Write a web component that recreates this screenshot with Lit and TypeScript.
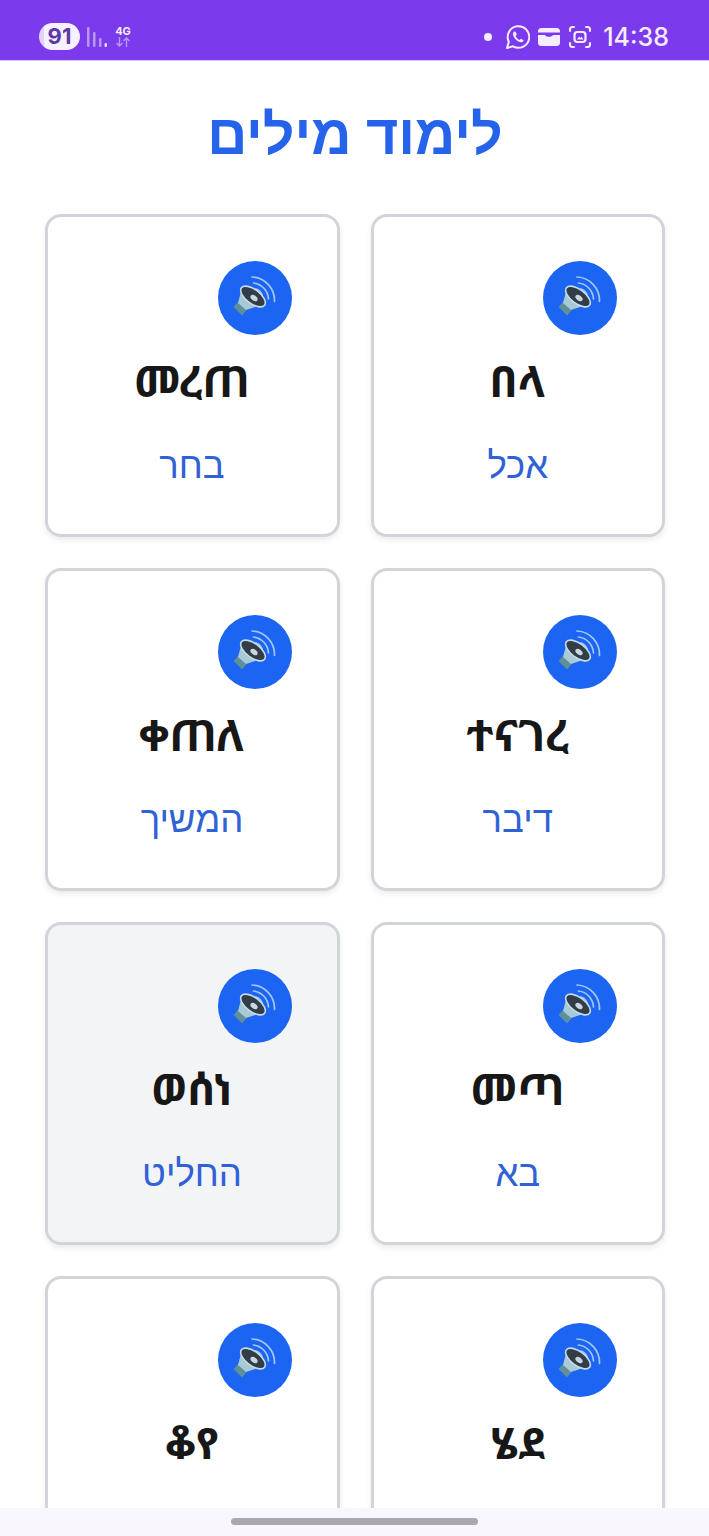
import { LitElement, css, html, nothing, svg } from 'lit';
import { customElement, property } from 'lit/decorators.js';

interface WordItem {
  word: string;
  meaning?: string;
  selected?: boolean;
}

const WORDS: WordItem[] = [
  { word: 'በላ', meaning: 'אכל' },
  { word: 'መረጠ', meaning: 'בחר' },
  { word: 'ተናገረ', meaning: 'דיבר' },
  { word: 'ቀጠለ', meaning: 'המשיך' },
  { word: 'መጣ', meaning: 'בא' },
  { word: 'ወሰነ', meaning: 'החליט', selected: true },
  { word: 'ሄደ' },
  { word: 'ቆየ' },
];

const speakerIcon = svg`
  <svg class="speaker" viewBox="0 0 74 74" aria-hidden="true">
    <g fill="none" stroke="#a4c6f6" stroke-linecap="round" stroke-width="1.7">
      <path d="M34 16 A23.5 23.5 0 0 1 56.5 40.5" />
      <path d="M35.5 22 A17 17 0 0 1 50.5 38" />
      <path d="M38 28 A10 10 0 0 1 44.5 36" />
    </g>
    <path d="M15.5 46 L21 40 L29.5 48 L24 54.5 Z" fill="#5f8f98" />
    <path d="M20 42 L24 27 L46 43 L28 49 Z" fill="#a8c9d6" />
    <ellipse cx="35" cy="35.5" rx="14.5" ry="7" transform="rotate(37 35 35.5)" fill="#333d47" stroke="#c4dce7" stroke-width="1.6" />
    <ellipse cx="36" cy="37" rx="4" ry="2.6" transform="rotate(37 36 37)" fill="#c9d8de" />
  </svg>
`;

@customElement('status-bar')
export class StatusBar extends LitElement {
  static styles = css`
    :host {
      display: flex;
      flex: none;
      align-items: center;
      justify-content: space-between;
      box-sizing: border-box;
      height: 61px;
      padding: 13px 40px 0 39px;
      background: #7c3aed;
      border-bottom: 1px solid #d8c2f9;
      color: #f5edff;
      font-family: Inter, Roboto, sans-serif;
    }

    .group {
      display: flex;
      align-items: center;
    }

    .battery {
      width: 41px;
      height: 27px;
      border-radius: 14px;
      background: linear-gradient(90deg, #e2d2fb 0 5px, #f6f0ff 5px);
      color: #5b3aa8;
      font-size: 22px;
      font-weight: 700;
      line-height: 27px;
      text-align: center;
    }

    .signal {
      width: 20px;
      height: 20px;
      margin-left: 7px;
    }

    .net {
      display: flex;
      flex-direction: column;
      align-items: center;
      width: 18px;
      margin: -2px 0 0 7px;
      font-size: 11px;
      font-weight: 700;
      line-height: 12px;
    }

    .arrows {
      width: 16px;
      height: 10px;
    }

    .dot {
      width: 8px;
      height: 8px;
      border-radius: 50%;
      background: #f5edff;
    }

    .icon {
      width: 24px;
      height: 24px;
    }

    .whatsapp {
      margin-left: 14px;
    }

    .wallet {
      margin-left: 7px;
    }

    .scan {
      margin-left: 7px;
    }

    .time {
      margin-left: 11px;
      font-size: 25px;
      font-weight: 500;
      line-height: 28px;
    }
  `;

  render() {
    return html`
      <div class="group">
        <div class="battery">91</div>
        <svg class="signal" viewBox="0 0 20 20" fill="#b79af0">
          <rect x="0" y="0" width="2.5" height="20" rx="1" />
          <rect x="6" y="5" width="2.5" height="15" rx="1" />
          <rect x="12" y="11" width="2.5" height="9" rx="1" />
          <rect x="17.5" y="16" width="2.5" height="4" rx="1" fill="#e6dafb" />
        </svg>
        <div class="net">
          4G
          <svg class="arrows" viewBox="0 0 16 10" fill="none" stroke="#b79af0" stroke-width="1.4">
            <path d="M4.5 0 V9 M1.5 6 L4.5 9 L7.5 6" />
            <path d="M11.5 10 V1 M8.5 4 L11.5 1 L14.5 4" />
          </svg>
        </div>
      </div>
      <div class="group">
        <div class="dot"></div>
        <svg class="icon whatsapp" viewBox="0 0 24 24">
          <path d="M1 23 L2.8 16.8 A10.8 10.8 0 1 1 7 21.3 Z" fill="none" stroke="#f5edff" stroke-width="2" stroke-linejoin="round" />
          <path d="M8.4 6.6 C7 7.4 6.6 9 7.4 11 C8.6 14 11 16.2 14 17.1 C15.8 17.6 17.2 16.8 17.7 15.2 L15 13.7 L13.6 15 C11.8 14.3 10.4 12.8 9.6 11 L10.8 9.5 L9.6 6.7 Z" fill="#f5edff" />
        </svg>
        <svg class="icon wallet" viewBox="0 0 24 24">
          <path d="M4.5 3 H19.5 A3.5 3.5 0 0 1 23 6.5 V7.5 H1 V6.5 A3.5 3.5 0 0 1 4.5 3 Z" fill="#f5edff" />
          <path d="M1 10 H8 C9 12.4 15 12.4 16 10 H23 V17.5 A3.5 3.5 0 0 1 19.5 21 H4.5 A3.5 3.5 0 0 1 1 17.5 Z" fill="#f5edff" />
        </svg>
        <svg class="icon scan" viewBox="0 0 24 24" fill="none" stroke="#f5edff" stroke-width="2" stroke-linecap="round">
          <path d="M2 6 V4.5 A2.5 2.5 0 0 1 4.5 2 H6" />
          <path d="M18 2 H19.5 A2.5 2.5 0 0 1 22 4.5 V6" />
          <path d="M22 18 V19.5 A2.5 2.5 0 0 1 19.5 22 H18" />
          <path d="M6 22 H4.5 A2.5 2.5 0 0 1 2 19.5 V18" />
          <rect x="6.5" y="7" width="11" height="10" rx="3" stroke-width="2.2" />
          <path d="M9 14.5 L11 11.5 L12.5 13 L13.5 11.5 L15.5 14.5 Z" fill="#f5edff" stroke="none" />
        </svg>
        <div class="time">14:38</div>
      </div>
    `;
  }
}

@customElement('word-card')
export class WordCard extends LitElement {
  @property({ type: String }) word = '';
  @property({ type: String }) meaning = '';
  @property({ type: Boolean, reflect: true }) selected = false;

  static styles = css`
    :host {
      display: flex;
      flex-direction: column;
      align-items: center;
      box-sizing: border-box;
      height: 323px;
      padding: 44px 45px 0;
      background: #fff;
      border: 3px solid #d1d5db;
      border-radius: 16px;
      box-shadow: 0 3px 6px rgba(0, 0, 0, 0.08);
    }

    :host([selected]) {
      background: #f3f4f6;
    }

    button {
      display: flex;
      align-self: flex-start;
      width: 74px;
      height: 74px;
      padding: 0;
      border: 0;
      border-radius: 50%;
      background: #1c64f2;
    }

    .speaker {
      width: 74px;
      height: 74px;
    }

    .word {
      margin-top: 13px;
      color: #171717;
      font-family: 'Noto Sans Ethiopic', 'DejaVu Sans', 'Liberation Sans', sans-serif;
      font-size: 44px;
      font-weight: 700;
      line-height: 64px;
    }

    .meaning {
      margin-top: 28px;
      color: #2f62d6;
      font-family: 'Noto Sans', 'Liberation Sans', sans-serif;
      font-size: 36.5px;
      font-weight: 500;
      line-height: 48px;
    }
  `;

  render() {
    return html`
      <button aria-label="השמע">${speakerIcon}</button>
      <div class="word" lang="am">${this.word}</div>
      ${this.meaning ? html`<div class="meaning">${this.meaning}</div>` : nothing}
    `;
  }
}

@customElement('app-root')
export class AppRoot extends LitElement {
  static styles = css`
    :host {
      display: flex;
      flex-direction: column;
      height: 1536px;
      overflow: hidden;
      background: #fff;
    }

    main {
      flex: 1;
      min-height: 0;
      overflow: hidden;
      padding: 0 44px 0 45px;
    }

    h1 {
      margin: 40px 0 0;
      color: #2563eb;
      font-family: 'Noto Sans', 'Liberation Sans', sans-serif;
      font-size: 55.5px;
      font-weight: 700;
      line-height: 64px;
      text-align: center;
    }

    .grid {
      display: grid;
      grid-template-columns: 294.5px 295px;
      gap: 31px;
      margin-top: 48.5px;
    }

    .nav {
      display: flex;
      flex: none;
      justify-content: center;
      height: 28px;
      padding-top: 10px;
      box-sizing: border-box;
      background: #f9f6fe;
    }

    .handle {
      width: 247px;
      height: 7px;
      border-radius: 4px;
      background: #aaa7b0;
    }
  `;

  render() {
    return html`
      <status-bar></status-bar>
      <main dir="rtl">
        <h1>לימוד מילים</h1>
        <div class="grid">
          ${WORDS.map(
            (item) => html`<word-card
              .word=${item.word}
              .meaning=${item.meaning ?? ''}
              ?selected=${item.selected}
            ></word-card>`,
          )}
        </div>
      </main>
      <div class="nav"><div class="handle"></div></div>
    `;
  }
}

declare global {
  interface HTMLElementTagNameMap {
    'app-root': AppRoot;
    'word-card': WordCard;
    'status-bar': StatusBar;
  }
}
